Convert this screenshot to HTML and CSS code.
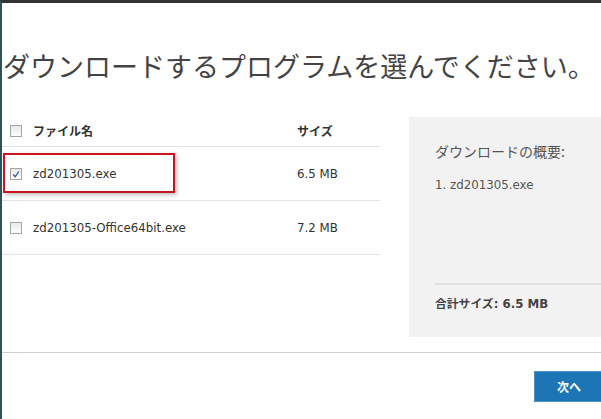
FILE: index.html
```html
<!DOCTYPE html>
<html lang="ja">
<head>
  <meta charset="UTF-8">
  <title>ダウンロード</title>
  <link rel="stylesheet" href="styles.css">
</head>
<body>

<div class="page">
  <h1 class="title">ダウンロードするプログラムを選んでください。</h1>

  <div class="content">
    <!-- file list -->
    <div class="files">
      <div class="row head">
        <span class="cb"></span>
        <span class="name">ファイル名</span>
        <span class="size">サイズ</span>
      </div>
      <div class="row picked">
        <span class="cb checked">
          <svg viewBox="0 0 11 11" width="11" height="11"><path d="M2.5 5.5 L4.6 8 L8.6 2.2" fill="none" stroke="#2c4f9e" stroke-width="1.4"/></svg>
        </span>
        <span class="name">zd201305.exe</span>
        <span class="size">6.5 MB</span>
        <div class="mark"></div>
      </div>
      <div class="row">
        <span class="cb"></span>
        <span class="name">zd201305-Office64bit.exe</span>
        <span class="size">7.2 MB</span>
      </div>
    </div>

    <!-- summary panel -->
    <div class="summary">
      <div class="sum-title">ダウンロードの概要:</div>
      <div class="sum-item">1. zd201305.exe</div>
      <div class="sum-total">合計サイズ: 6.5 MB</div>
    </div>
  </div>

  <div class="footer">
    <button class="next">次へ</button>
  </div>
</div>

</body>
</html>
```

FILE: styles.css
```css
* {box-sizing: border-box;}
html, body {overflow: hidden;}
body {
  margin: 0;
  height: 419px;
  background: #fff;
  border-top: 3px solid #333;
  border-left: 2px solid #2e5256;
  font-family: "DejaVu Sans", "Noto Sans CJK JP", sans-serif;
  color: #333;
}

.title {
  margin: 45px 0 0 1px;
  font-family: "Noto Sans CJK JP", sans-serif;
  font-weight: 400;
  font-size: 27px;
  line-height: 36px;
  color: #444;
  white-space: nowrap;
}

.content {
  display: flex;
  gap: 29px;
  margin-top: 30px;
}

/* file table */
.files {width: 378px; padding-top: 1px;}

.row {
  position: relative;
  display: flex;
  align-items: center;
  height: 54px;
  border-bottom: 1px solid #e2e2e2;
  font-size: 11.8px;
}
.row.head {height: 32px; font-weight: bold; font-family: "Noto Sans CJK JP", sans-serif; font-size: 12px;}

.cb {
  width: 12px;
  height: 12px;
  margin: 0 11px 0 8px;
  border: 1px solid #a4a4a4;
  background: linear-gradient(#e9e9e9, #fdfdfd);
  display: flex;
}
.name {width: 264px;}
.size {width: 80px;}

/* red annotation round the picked row */
.mark {
  position: absolute;
  left: 1px;
  top: 6px;
  width: 172px;
  height: 40px;
  border: 2px solid #c9141c;
  box-shadow: 2px 2px 4px rgba(0,0,0,0.25);
}

/* summary */
.summary {
  flex: 1;
  height: 220px;
  margin-top: 3px;
  padding: 24px 0 0 26px;
  background: #f2f2f2;
  color: #555;
}
.sum-title {
  font-family: "Noto Sans CJK JP", sans-serif;
  font-size: 14px;
  line-height: 20px;
}
.sum-item {margin-top: 16px; font-size: 11.8px; line-height: 16px;}
.sum-total {
  margin-top: 90px;
  padding-top: 9px;
  border-top: 2px solid #e2e2e2;
  font-size: 11.8px;
  font-weight: bold;
  color: #444;
}

/* footer */
.footer {
  margin-top: 15px;
  border-top: 1px solid #cfcfcf;
  padding: 18px 0 0 532px;
}
.next {
  width: 67px;
  height: 31px;
  padding: 0 0 0 4px;
  text-align: left;
  border: 1px solid #4a8fc6;
  border-right: none;
  background: #1c75b4;
  color: #fff;
  font-family: "Noto Sans CJK JP", sans-serif;
  font-weight: bold;
  font-size: 12px;
  text-indent: 18px;
}
```
